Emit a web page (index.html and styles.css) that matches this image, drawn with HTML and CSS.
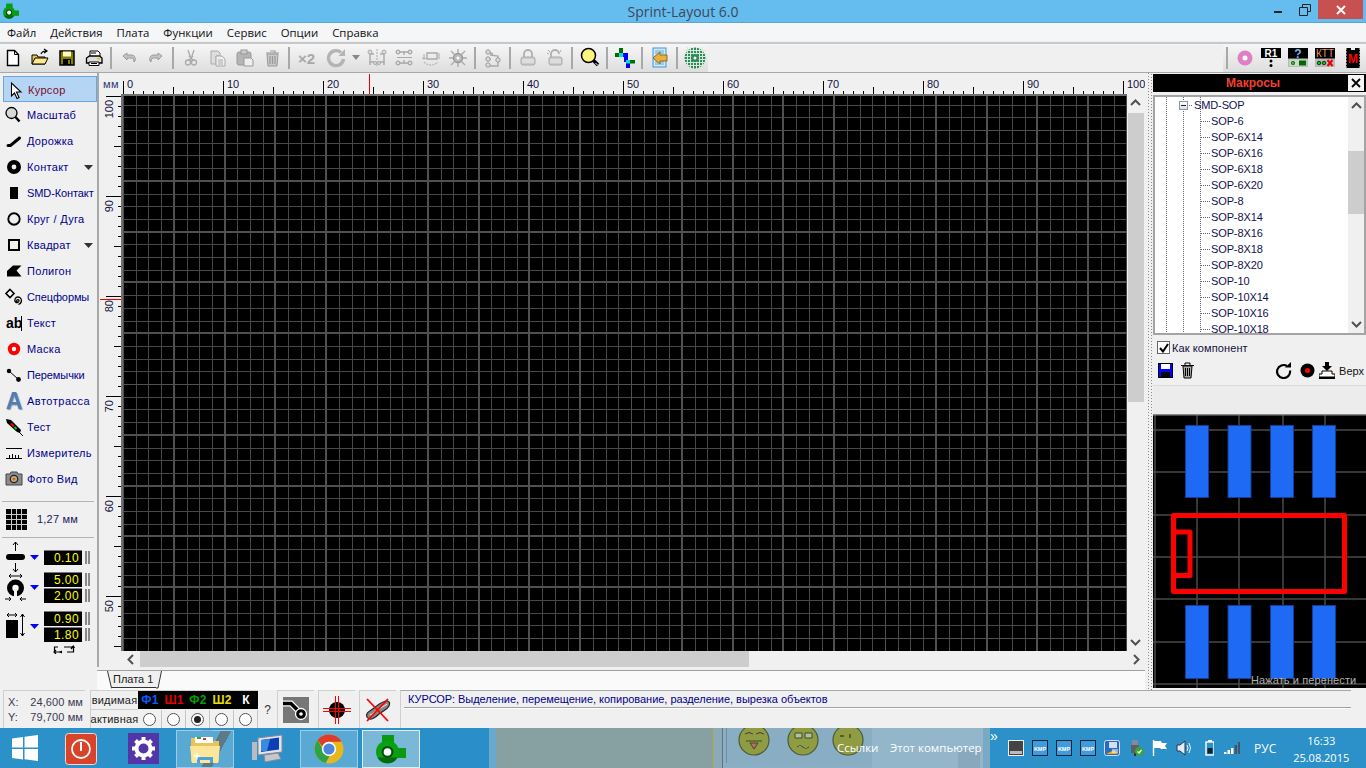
FILE: index.html
```html
<!DOCTYPE html>
<html lang="ru">
<head>
<meta charset="utf-8">
<title>Sprint-Layout 6.0</title>
<link rel="stylesheet" href="styles.css">
</head>
<body>
<svg class="defs" width="0" height="0">
  <defs>
    <symbol id="spider" viewBox="0 0 30 30">
      <rect x="6" y="1" width="12" height="10" fill="#0a9a12"/>
      <rect x="19" y="14" width="11" height="10" fill="#0a9a12"/>
      <circle cx="11.500" cy="18" r="11.500" fill="#0aa014"/>
      <path d="M1.500 23.500a11.500 11.500 0 0 0 20 0z" fill="#056a0c"/>
      <circle cx="11.500" cy="18" r="6" fill="#04500a"/>
      <circle cx="11.500" cy="18" r="3.800" fill="#fff"/>
    </symbol>
    <pattern id="gridp" patternUnits="userSpaceOnUse" x="123" y="130" width="254" height="254">
      <path shape-rendering="crispEdges" fill="none" stroke="#484848" stroke-width="1" d="M13 0V254M25 0V254M38 0V254M64 0V254M76 0V254M89 0V254M114 0V254M127 0V254M140 0V254M165 0V254M178 0V254M191 0V254M216 0V254M229 0V254M241 0V254M0 13H254M0 25H254M0 38H254M0 64H254M0 76H254M0 89H254M0 114H254M0 127H254M0 140H254M0 165H254M0 178H254M0 191H254M0 216H254M0 229H254M0 241H254"/>
      <path shape-rendering="crispEdges" fill="none" stroke="#505050" stroke-width="2" d="M0 0V254M51 0V254M102 0V254M152 0V254M203 0V254M0 0H254M0 51H254M0 102H254M0 152H254M0 203H254"/>
    </pattern>
    <pattern id="rtick" patternUnits="userSpaceOnUse" x="123" y="73" width="100" height="21">
      <path shape-rendering="crispEdges" stroke="#000" d="M0 8V21M50 14V21M10 18V21M20 18V21M30 18V21M40 18V21M60 18V21M70 18V21M80 18V21M90 18V21"/>
    </pattern>
    <pattern id="vtick" patternUnits="userSpaceOnUse" x="99" y="96" width="22" height="100">
      <path shape-rendering="crispEdges" stroke="#000" d="M7 0H22M15 50H22M19 10H22M19 20H22M19 30H22M19 40H22M19 60H22M19 70H22M19 80H22M19 90H22"/>
    </pattern>
  </defs>
</svg>

<header class="titlebar">
  <svg class="title-icon" width="16" height="16"><use href="#spider"/></svg>
  <span class="title-text">Sprint-Layout 6.0</span>
  <div class="win-btns">
    <span class="win-btn"><svg width="12" height="12"><rect x="2" y="7" width="8" height="2" fill="#222"/></svg></span>
    <span class="win-btn"><svg width="12" height="12"><path d="M3.500 3V.5h8v7H9M.5 3.500h8v8h-8z" fill="none" stroke="#222"/></svg></span>
    <span class="win-close"><svg width="12" height="12"><path d="M2 2l8 8M10 2l-8 8" stroke="#fff" stroke-width="2"/></svg></span>
  </div>
</header>

<nav class="menubar">
  <span class="menu-item">Файл</span><span class="menu-item">Действия</span><span class="menu-item">Плата</span><span class="menu-item">Функции</span><span class="menu-item">Сервис</span><span class="menu-item">Опции</span><span class="menu-item">Справка</span>
</nav>

<div class="toolbar">
  <span class="tb"><svg width="20" height="20"><path d="M4.500 2.500h7l4 4v11h-11z" fill="#fff" stroke="#000" stroke-width="1.400"/><path d="M11.500 2.500v4h4" fill="none" stroke="#000"/></svg></span>
  <span class="tb"><svg width="20" height="20"><path d="M2 16V7h5l1 2h7v7z" fill="#e8c860" stroke="#000"/><path d="M2 16l3-6h13l-3 6z" fill="#ffe88a" stroke="#000"/><path d="M11 6c1-3 3-3 5-3M14 1l3 2-3 2" fill="none" stroke="#000" stroke-width="1.200"/></svg></span>
  <span class="tb"><svg width="20" height="20"><rect x="3" y="3" width="14" height="14" fill="#808000" stroke="#000" stroke-width="1.500"/><rect x="6" y="3.500" width="8" height="5" fill="#fff8c0"/><rect x="6" y="11" width="8" height="6" fill="#000"/><rect x="11" y="12" width="2" height="4" fill="#808000"/></svg></span>
  <span class="tb"><svg width="20" height="20"><path d="M6 8V3h8l2 2v3" fill="#fff" stroke="#000"/><path d="M2.500 15V10l3-2h10l2.500 2v5z" fill="#ddd" stroke="#000" stroke-width="1.300"/><path d="M5 14h10v3.500H5z" fill="#fff" stroke="#000"/><rect x="13" y="10" width="3" height="1.500" fill="#e0c020"/><path d="M7 5h5M7 15.500h6" stroke="#000"/></svg></span>
  <span class="sep"></span>
  <span class="tb"><svg width="20" height="20"><path d="M4 8l4-3v2h4c3 0 5 2 4 6l-1 1c0-3-1-4-3-4H8v2z" fill="#c4c4c4" stroke="#999"/></svg></span>
  <span class="tb"><svg width="20" height="20"><path d="M16 8l-4-3v2H8c-3 0-5 2-4 6l1 1c0-3 1-4 3-4h4v2z" fill="#c4c4c4" stroke="#999"/></svg></span>
  <span class="sep"></span>
  <span class="tb"><svg width="20" height="20"><path d="M7 2l3 9 3-9M7 17a2.500 2.500 0 1 0 0-5 2.500 2.500 0 0 0 0 5zM13 17a2.500 2.500 0 1 0 0-5 2.500 2.500 0 0 0 0 5zM8 12l4-4M12 12L8 8" fill="none" stroke="#aaa" stroke-width="1.300"/></svg></span>
  <span class="tb"><svg width="20" height="20"><path d="M3 3h7l2 2v3H8v8H3z" fill="#ddd" stroke="#aaa"/><path d="M8 8h6l3 3v7H8z" fill="#eee" stroke="#aaa"/><path d="M10 12h5M10 14h5M10 16h5" stroke="#aaa"/></svg></span>
  <span class="tb"><svg width="20" height="20"><rect x="2" y="4" width="14" height="13" rx="2" fill="#b4b4b4" stroke="#999"/><rect x="6" y="2" width="6" height="4" fill="#ccc" stroke="#999"/><path d="M9 10h7l2 2v6H9z" fill="#eee" stroke="#999"/></svg></span>
  <span class="tb"><svg width="20" height="20"><path d="M5 6h11l-1 12H6z" fill="#c8c8c8" stroke="#999"/><path d="M4 5h13M8 3h5v2M8 8v8M10.500 8v8M13 8v8" fill="none" stroke="#999" stroke-width="1.200"/></svg></span>
  <span class="sep"></span>
  <span class="tb tb-x2">×2</span>
  <span class="tb tb-wide"><svg width="24" height="20"><path d="M15 4.500a7.500 7.500 0 1 0 2.500 6.500" fill="none" stroke="#b4b4b4" stroke-width="3.400"/><path d="M12.500 8l6.500 0V1z" fill="#b4b4b4"/></svg><svg class="tb-caret" width="9" height="6"><path d="M0 0h8L4 5z" fill="#888"/></svg></span>
  <span class="tb"><svg width="20" height="20"><path d="M10 1v18" stroke="#aaa" stroke-dasharray="2 1"/><path d="M3 3v14M17 3v14M3 6h4M17 6h-4M3 14h4M17 14h-4" stroke="#aaa" stroke-width="1.500" fill="none"/><circle cx="3" cy="4" r="2" fill="#ddd" stroke="#aaa"/><circle cx="17" cy="4" r="2" fill="#ddd" stroke="#aaa"/><circle cx="8" cy="15" r="1.500" fill="#ddd" stroke="#aaa"/><circle cx="12" cy="15" r="1.500" fill="#ddd" stroke="#aaa"/></svg></span>
  <span class="tb"><svg width="20" height="20"><path d="M3 9.500h15" stroke="#aaa"/><path d="M3 4h14M3 15h14M10 7V3M10 12v4" stroke="#aaa" stroke-width="1.400"/><circle cx="4" cy="4" r="2" fill="#ddd" stroke="#999"/><circle cx="16" cy="4" r="2" fill="#ddd" stroke="#999"/><circle cx="4" cy="15" r="2" fill="#ddd" stroke="#999"/><circle cx="16" cy="15" r="2" fill="#ddd" stroke="#999"/></svg></span>
  <span class="tb"><svg width="20" height="20"><path d="M6 5h10v6H6z" fill="none" stroke="#aaa" stroke-width="1.400"/><path d="M3 6v5l-2-1M3 11l2-1M18 5v6" stroke="#aaa" fill="none"/><path d="M3 14c4 4 10 4 14 0" fill="none" stroke="#bbb" stroke-width="1.400" stroke-dasharray="2 1"/></svg></span>
  <span class="tb"><svg width="20" height="20"><circle cx="10" cy="10" r="4.500" fill="#bbb" stroke="#999" stroke-width="1.500"/><circle cx="10" cy="10" r="1.500" fill="#fff"/><path d="M10 1v4M10 15v4M1 10h4M15 10h4M3 3l3.500 3.500M17 3l-3.500 3.500M3 17l3.500-3.500M17 17l-3.500-3.500" stroke="#aaa" stroke-width="1.400"/></svg></span>
  <span class="sep"></span>
  <span class="tb"><svg width="20" height="20"><path d="M5 4l5 2M4 11h4M5 18h10V8l-8-1" fill="none" stroke="#aaa" stroke-width="1.400"/><circle cx="5" cy="4" r="2.200" fill="#ddd" stroke="#999"/><circle cx="5" cy="11" r="2.200" fill="#ddd" stroke="#999"/><circle cx="5" cy="17" r="2.200" fill="#ddd" stroke="#999"/><circle cx="15" cy="12" r="2.200" fill="#ddd" stroke="#999"/></svg></span>
  <span class="sep"></span>
  <span class="tb"><svg width="20" height="20"><path d="M6 9V6a4 4 0 0 1 8 0v3" fill="none" stroke="#b0b0b0" stroke-width="1.800"/><rect x="3" y="9" width="14" height="8" rx="2" fill="#ccc" stroke="#aaa"/><path d="M4 12h12M4 14h12" stroke="#eee"/></svg></span>
  <span class="tb"><svg width="20" height="20"><path d="M6 9V6a4 4 0 0 1 8 0" fill="none" stroke="#b0b0b0" stroke-width="1.800"/><rect x="4" y="9" width="13" height="8" rx="2" fill="#ccc" stroke="#aaa"/><path d="M5 12h11M5 14h11" stroke="#eee"/><path d="M2 5l2 1M3 2l2 2M16 2l-1 2" stroke="#aaa"/></svg></span>
  <span class="sep"></span>
  <span class="tb"><svg width="20" height="22"><path d="M13 13l5 5" stroke="#000" stroke-width="3.600"/><path d="M15.500 16l2 2" stroke="#fff" stroke-width="1"/><circle cx="8.500" cy="8.500" r="7" fill="#fff57a" stroke="#000" stroke-width="1.500"/></svg></span>
  <span class="sep"></span>
  <span class="tb"><svg width="20" height="20"><rect x="4" y="0" width="4" height="6" fill="#006f00"/><rect x="0" y="5" width="10" height="4" fill="#006f00"/><rect x="12" y="12" width="8" height="3.500" fill="#006f00"/><path d="M7 5h6v9h2v6h-4v-6h-2V9H7z" fill="#0000f0"/><rect x="4" y="5" width="4" height="4" fill="#00e0e0"/><rect x="11" y="12" width="4" height="3.500" fill="#00e0e0"/></svg></span>
  <span class="sep"></span>
  <span class="tb"><svg width="20" height="22"><rect x="3" y="1" width="13" height="19" fill="#cfe8fb" stroke="#3b97dd"/><path d="M5 4h9M5 6h9M5 15h9M5 17h9" stroke="#7ab"/><path d="M3 11l7-6v3h7v6h-7v3z" fill="#e8b040" stroke="#8a6a20"/></svg></span>
  <span class="sep"></span>
  <span class="tb"><svg width="22" height="22"><circle cx="11" cy="11" r="10.500" fill="#2e8b57"/><path d="M0 3.500h22M0 6.500h22M0 9.500h22M0 12.500h22M0 15.500h22M0 18.500h22M3.500 0v22M6.500 0v22M9.500 0v22M12.500 0v22M15.500 0v22M18.500 0v22" stroke="#d8e8dc"/><circle cx="11" cy="11" r="4" fill="#2e8b57"/><circle cx="11" cy="11" r="1.500" fill="#fff"/></svg></span>
  <span class="tb-fill"></span>
  <span class="sep"></span>
  <span class="tb"><svg width="20" height="20"><circle cx="10" cy="10" r="7.500" fill="#e080c4"/><circle cx="10" cy="10" r="2.500" fill="#fff"/></svg></span>
  <span class="tb"><svg width="21" height="22"><rect x="0" y="1" width="20" height="10" fill="#000"/><text x="10" y="9.500" text-anchor="middle" class="ico-r1">R1</text><circle cx="10" cy="14" r="1.500"/><circle cx="10" cy="18.500" r="1.500"/></svg></span>
  <span class="tb"><svg width="21" height="22"><rect x="0" y="1" width="20" height="19" fill="#bbb"/><rect x="0" y="1" width="20" height="10.500" fill="#000"/><text x="10" y="10.500" text-anchor="middle" class="ico-q">?</text><rect x="1.500" y="12.500" width="17" height="6.500" fill="#c8dcc8"/><circle cx="5" cy="16" r="2" fill="#060"/><circle cx="5" cy="16" r=".7" fill="#fff"/><rect x="11" y="13.500" width="7" height="5" fill="#060"/></svg></span>
  <span class="tb"><svg width="21" height="22"><rect x="0" y="1" width="20" height="19" fill="#bbb"/><rect x="0" y="1" width="20" height="10.500" fill="#000"/><text x="10" y="10" text-anchor="middle" class="ico-ktt">КТТ</text><circle cx="4" cy="16" r="1.800" fill="#0c0" stroke="#000" stroke-width=".7"/><circle cx="9" cy="16" r="1.800" fill="#0c0" stroke="#000" stroke-width=".7"/><path d="M12.500 13l5 6M17.500 13l-5 6" stroke="#e00" stroke-width="2"/></svg></span>
  <span class="tb"><svg width="14" height="22"><rect x="0" y="1" width="14" height="20" fill="#000"/><path d="M0 2h1M0 5h1M0 8h1M0 11h1M0 14h1M0 17h1M0 20h1M13 2h1M13 5h1M13 8h1M13 11h1M13 14h1M13 17h1M13 20h1" stroke="#eee"/><rect x="5" y="1" width="4" height="2" fill="#eee"/><text x="7" y="16" text-anchor="middle" class="ico-m">M</text></svg></span>
</div>

<main class="main">
  <aside class="tools">
    <div class="tool selected">
      <svg class="ic" viewBox="0 0 22 22"><path d="M7.500 4V17l3-3 2.500 5.500 2-1-2.500-5.500h4.500z" fill="#fff" stroke="#000" stroke-width="1.100"/></svg>
      <span>Курсор</span>
    </div>
    <div class="tool">
      <svg class="ic" viewBox="0 0 22 22"><path d="M12.500 13l4 4.500" stroke="#000" stroke-width="2.500"/><circle cx="8.500" cy="9" r="5.500" fill="#d8d8d8" stroke="#000" stroke-width="1.300"/></svg>
      <span>Масштаб</span>
    </div>
    <div class="tool">
      <svg class="ic" viewBox="0 0 22 22"><path d="M5 15.500h2.500l9-7.500" fill="none" stroke="#000" stroke-width="3" stroke-linecap="round"/></svg>
      <span>Дорожка</span>
    </div>
    <div class="tool">
      <svg class="ic" viewBox="0 0 22 22"><circle cx="11" cy="11" r="4.700" fill="none" stroke="#000" stroke-width="4.600"/></svg>
      <span>Контакт</span>
      <svg class="caret" width="9" height="5"><path d="M0 0h9L4.500 5z" fill="#333"/></svg>
    </div>
    <div class="tool">
      <svg class="ic" viewBox="0 0 22 22"><rect x="7" y="5" width="8" height="12" fill="#000"/></svg>
      <span class="tight">SMD-Контакт</span>
    </div>
    <div class="tool">
      <svg class="ic" viewBox="0 0 22 22"><circle cx="11" cy="11" r="5.700" fill="none" stroke="#000" stroke-width="1.900"/></svg>
      <span>Круг / Дуга</span>
    </div>
    <div class="tool">
      <svg class="ic" viewBox="0 0 22 22"><rect x="6" y="6" width="10" height="10" fill="none" stroke="#000" stroke-width="2"/></svg>
      <span>Квадрат</span>
      <svg class="caret" width="9" height="5"><path d="M0 0h9L4.500 5z" fill="#333"/></svg>
    </div>
    <div class="tool">
      <svg class="ic" viewBox="0 0 22 22"><path d="M4 16.500V11l6-5.500h8.500l-5 5 5 6z" fill="#000"/></svg>
      <span>Полигон</span>
    </div>
    <div class="tool">
      <svg class="ic" viewBox="0 0 22 22"><path d="M7 3.500l4 4-4 4-4-4z" fill="#fff" stroke="#000" stroke-width="1.600"/><path d="M14.500 16a1.200 1.200 0 1 1 1.500-1.500c.4 1.800-2.200 2.800-3.400 1.500-1.800-1.800-.2-5 2.400-5 2.600 0 3.800 2.500 3.400 4.500-.2 1-1.300 2.500-3 3" fill="none" stroke="#000" stroke-width="1.300"/></svg>
      <span class="tight">Спецформы</span>
    </div>
    <div class="tool">
      <span class="ic-ab">ab</span>
      <span>Текст</span>
    </div>
    <div class="tool">
      <svg class="ic" viewBox="0 0 22 22"><circle cx="11" cy="11" r="4.200" fill="#fff" stroke="#f00" stroke-width="4"/></svg>
      <span>Маска</span>
    </div>
    <div class="tool">
      <svg class="ic" viewBox="0 0 22 22"><path d="M6 7l9 8" stroke="#000"/><circle cx="6" cy="7" r="2.200"/><circle cx="15.500" cy="15.500" r="2.400"/></svg>
      <span class="tight">Перемычки</span>
    </div>
    <div class="tool">
      <span class="ic-a">A</span>
      <span class="wide">Автотрасса</span>
    </div>
    <div class="tool">
      <svg class="ic" viewBox="0 0 22 22"><path d="M15 15l5 5" stroke="#000"/><path d="M3 3l5 1 10 10-1 3-3-1L4 7z" fill="#000"/><path d="M8 7.500l3 3" stroke="#e00" stroke-width="2.200"/><path d="M11.500 11l2 2" stroke="#0c0" stroke-width="2.200"/></svg>
      <span>Тест</span>
    </div>
    <div class="tool">
      <svg class="ic" viewBox="0 0 22 22"><path d="M3 6.500h16M3 16.500h16M6.500 16v-3M9.500 16v-4M12.500 16v-3M15.500 16v-3" stroke="#000" stroke-width="1" fill="none"/></svg>
      <span>Измеритель</span>
    </div>
    <div class="tool">
      <svg class="ic" viewBox="0 0 22 22"><path d="M3 6h4l1-2h6l1 2h4v11H3z" fill="#8c8c8c" stroke="#444"/><circle cx="11" cy="11" r="3.700" fill="#c8b090" stroke="#222" stroke-width="1.300"/><circle cx="11" cy="11" r="1.500" fill="#c06820"/></svg>
      <span>Фото Вид</span>
    </div>

    <div class="grid-row">
      <svg width="21" height="21"><rect width="21" height="21" fill="#000"/><path d="M0 5.500h21M0 10.500h21M0 15.500h21M5.500 0v21M10.500 0v21M15.500 0v21" stroke="#ccc"/></svg>
      <span>1,27 мм</span>
    </div>

    <div class="params">
      <div class="param p1">
        <svg class="p-ic" width="28" height="15"><rect x="4" y="4" width="19" height="6" rx="3"/><path d="M13.500 -8v9M13.500 13v9M11 -5l2.500-3 2.500 3M11 19l2.500 3 2.500-3" fill="none" stroke="#000"/></svg>
        <svg class="p-tri" width="10" height="6"><path d="M0 0h9L4.500 5z" fill="#00f"/></svg>
        <div class="nums"><span class="num">0.10</span></div>
        <span class="grip"></span>
      </div>
      <div class="param p2">
        <svg class="p-ic" width="28" height="31"><path d="M7 4h13M7 4l2-2M7 4l2 2M20 4l-2-2M20 4l-2 2M3 27h6M18 27h6M9 27l-2-2M9 27l-2 2M18 27l2-2M18 27l2 2" fill="none" stroke="#000"/><circle cx="13.500" cy="16" r="8.500" fill="#000"/><circle cx="13.500" cy="16" r="3.200" fill="#fff"/><rect x="12" y="17" width="3" height="8" fill="#f0f0f0"/></svg>
        <svg class="p-tri" width="10" height="6"><path d="M0 0h9L4.500 5z" fill="#00f"/></svg>
        <div class="nums"><span class="num">5.00</span><span class="num">2.00</span></div>
        <span class="grip"></span>
      </div>
      <div class="param p3">
        <svg class="p-ic" width="28" height="31"><rect x="4" y="9" width="12" height="18" fill="#000"/><path d="M5 4h10M5 4l2-2M5 4l2 2M15 4l-2-2M15 4l-2 2M20.500 3v22M20.500 3l-2 3M20.500 3l2 3M20.500 25l-2-3M20.500 25l2-3" fill="none" stroke="#000"/></svg>
        <svg class="p-tri" width="10" height="6"><path d="M0 0h9L4.500 5z" fill="#00f"/></svg>
        <div class="nums"><span class="num">0.90</span><span class="num">1.80</span></div>
        <span class="grip"></span>
      </div>
      <svg class="swap" width="22" height="9"><path d="M5 2H1.500V7H9M3 5l-2 2 2 2M14 7h6.500V2H11M18 4l2.500-3" fill="none" stroke="#000" stroke-width="1.200"/><path d="M9 5.500v3l-3-1.500zM18 3l2.500-3L22 3z" fill="#000"/></svg>
    </div>
  </aside>

  <section class="center">
    <div class="work">
      <svg class="ruler-top" width="1046" height="21" viewBox="99 73 1046 21">
        <rect x="123" y="73" width="1001" height="21" fill="url(#rtick)"/>
        <rect x="369" y="74" width="1" height="20" fill="#e00"/>
        <text x="103" y="88" class="rl mm">мм</text>
        <text x="127" y="88" class="rl">0</text><text x="227" y="88" class="rl">10</text><text x="327" y="88" class="rl">20</text><text x="427" y="88" class="rl">30</text><text x="527" y="88" class="rl">40</text><text x="627" y="88" class="rl">50</text><text x="727" y="88" class="rl">60</text><text x="827" y="88" class="rl">70</text><text x="927" y="88" class="rl">80</text><text x="1027" y="88" class="rl">90</text><text x="1127" y="88" class="rl">100</text>
      </svg>
      <div class="work-row">
        <svg class="ruler-left" width="22" height="557" viewBox="99 94 22 557">
          <rect x="99" y="96" width="22" height="555" fill="url(#vtick)"/>
          <rect x="100" y="299" width="21" height="1" fill="#e00"/>
          <text transform="translate(113 100) rotate(-90)" text-anchor="end" class="rl">100</text>
          <text transform="translate(113 200) rotate(-90)" text-anchor="end" class="rl">90</text>
          <text transform="translate(113 300) rotate(-90)" text-anchor="end" class="rl">80</text>
          <text transform="translate(113 400) rotate(-90)" text-anchor="end" class="rl">70</text>
          <text transform="translate(113 500) rotate(-90)" text-anchor="end" class="rl">60</text>
          <text transform="translate(113 600) rotate(-90)" text-anchor="end" class="rl">50</text>
        </svg>
        <div class="canvas">
          <svg width="1004" height="555" viewBox="123 96 1004 555"><rect x="123" y="96" width="1004" height="555" fill="#000"/><rect x="123" y="96" width="1004" height="555" fill="url(#gridp)"/></svg>
        </div>
        <div class="vscroll">
          <span class="sb-btn"><svg width="11" height="7"><path d="M1 6l4.500-4.500L10 6" fill="none" stroke="#505050" stroke-width="2"/></svg></span>
          <span class="vthumb"></span>
          <span class="sb-gap"></span>
          <span class="sb-btn"><svg width="11" height="7"><path d="M1 1l4.500 4.500L10 1" fill="none" stroke="#505050" stroke-width="2"/></svg></span>
        </div>
      </div>
      <div class="hscroll">
        <span class="hbtn"><svg width="7" height="11"><path d="M6 1L1.500 5.500 6 10" fill="none" stroke="#505050" stroke-width="2"/></svg></span>
        <span class="hthumb"></span>
        <span class="sb-gap"></span>
        <span class="hbtn"><svg width="7" height="11"><path d="M1 1l4.500 4.500L1 10" fill="none" stroke="#505050" stroke-width="2"/></svg></span>
      </div>
    </div>
    <div class="tabbar">
      <div class="tab">
        <svg width="5" height="18"><path d="M.5 0l4 17h1V0z" fill="#f0f0f0"/><path d="M.5 0l4 17h1" fill="none" stroke="#333"/></svg>
        <span class="tab-text">Плата 1</span>
        <svg width="6" height="18"><path d="M5.500 0L2 17H0V0z" fill="#f0f0f0"/><path d="M5.500 0L2 17H0" fill="none" stroke="#333"/></svg>
      </div>
    </div>
  </section>

  <div class="gripper"></div>

  <aside class="macros">
    <div class="macro-title"><span>Макросы</span>
      <span class="macro-close"><svg width="10" height="10"><path d="M1 1l8 8M9 1L1 9" stroke="#000" stroke-width="1.800"/></svg></span>
    </div>
    <div class="tree-box">
      <div class="tree">
        <div class="tree-root"><span class="minus"></span><span class="conn-s"></span>SMD-SOP</div>
        <div class="leaf">SOP-6</div>
        <div class="leaf">SOP-6X14</div>
        <div class="leaf">SOP-6X16</div>
        <div class="leaf">SOP-6X18</div>
        <div class="leaf">SOP-6X20</div>
        <div class="leaf">SOP-8</div>
        <div class="leaf">SOP-8X14</div>
        <div class="leaf">SOP-8X16</div>
        <div class="leaf">SOP-8X18</div>
        <div class="leaf">SOP-8X20</div>
        <div class="leaf">SOP-10</div>
        <div class="leaf">SOP-10X14</div>
        <div class="leaf">SOP-10X16</div>
        <div class="leaf">SOP-10X18</div>
      </div>
      <div class="tree-sb">
        <span class="sb-btn"><svg width="11" height="7"><path d="M1 6l4.500-4.500L10 6" fill="none" stroke="#505050" stroke-width="2"/></svg></span>
        <span class="tree-thumb"></span>
        <span class="sb-gap"></span>
        <span class="sb-btn"><svg width="11" height="7"><path d="M1 1l4.500 4.500L10 1" fill="none" stroke="#505050" stroke-width="2"/></svg></span>
      </div>
    </div>
    <label class="check-row"><span class="check"><svg width="10" height="10"><path d="M1 5l3 3.500L9 1" fill="none" stroke="#000" stroke-width="2"/></svg></span>Как компонент</label>
    <div class="macro-tools">
      <svg width="15" height="15"><rect x=".5" y=".5" width="14" height="14" fill="#00f" stroke="#000"/><rect x="3" y="1" width="9" height="5" fill="#fff"/><rect x="3" y="9" width="9" height="5.500" fill="#000"/></svg>
      <svg class="mt-trash" width="15" height="17"><path d="M3 4h9l-1 12H4z" fill="#aaa" stroke="#000"/><path d="M1 3.500h13M5 3V1h5v2M5.500 6v8M7.500 6v8M9.500 6v8" fill="none" stroke="#000"/></svg>
      <span class="mt-fill"></span>
      <svg width="17" height="17"><path d="M12 4a6.500 6.500 0 1 0 3 4.500" fill="none" stroke="#000" stroke-width="2.200"/><path d="M10 5.500h6V0z" fill="#000"/></svg>
      <svg class="mt-rec" width="15" height="15"><circle cx="7.500" cy="7.500" r="7"/><circle cx="7.500" cy="7.500" r="2.500" fill="#f00"/></svg>
      <svg class="mt-stamp" width="16" height="17"><path d="M6 0h4v4h3L8 9 3 4h3z" fill="#000"/><path d="M3 9h10v3h3v3H0v-3h3z" fill="#fff" stroke="#000"/><rect x="0" y="15" width="16" height="2"/></svg>
      <span class="mt-label">Верх</span>
    </div>
    <div class="preview-strip"></div>
    <svg class="preview" width="213" height="274" viewBox="1153 414 213 274">
      <rect x="1153" y="414" width="213" height="274" fill="#000"/>
      <path d="M1155 414V688M1197 414V688M1239 414V688M1283 414V688M1325 414V688M1153 430H1366M1153 472H1366M1153 515H1366M1153 557H1366M1153 599H1366M1153 642H1366M1153 684H1366" stroke="#4a4a4a" stroke-width="1.500"/>
      <rect x="1153" y="414" width="213" height="1.500" fill="#888"/>
      <g fill="#1e6af5" stroke="#0f3f9a"><rect x="1185.500" y="425.500" width="23" height="72"/><rect x="1228" y="425.500" width="23" height="72"/><rect x="1270.500" y="425.500" width="23" height="72"/><rect x="1312.500" y="425.500" width="23" height="72"/><rect x="1185.500" y="605.500" width="23" height="73"/><rect x="1228" y="605.500" width="23" height="73"/><rect x="1270.500" y="605.500" width="23" height="73"/><rect x="1312.500" y="605.500" width="23" height="73"/></g>
      <path d="M1173.500 515.500H1344.500V591.500H1173.500ZM1173.500 532H1190V575.500H1173.500" fill="none" stroke="#f00" stroke-width="5" stroke-linejoin="round"/>
      <text x="1251" y="684" class="drag-hint">Нажать и перенести</text>
    </svg>
  </aside>
</main>

<footer class="statusbar">
  <div class="coords">
    <div class="coord"><span>X:</span><span>24,600 мм</span></div>
    <div class="coord"><span>Y:</span><span>79,700 мм</span></div>
  </div>
  <div class="layers">
    <span class="lay-name">видимая</span>
    <span class="lay l-f1">Ф1</span><span class="lay l-s1">Ш1</span><span class="lay l-f2">Ф2</span><span class="lay l-s2">Ш2</span><span class="lay l-k">К</span>
    <span class="lay-name">активная</span>
    <span class="rad-cell"><span class="radio"></span></span><span class="rad-cell"><span class="radio"></span></span><span class="rad-cell"><span class="radio on"></span></span><span class="rad-cell"><span class="radio"></span></span><span class="rad-cell"><span class="radio"></span></span>
  </div>
  <span class="help">?</span>
  <div class="st-btn"><svg width="26" height="26"><rect width="26" height="26" fill="#777"/><path d="M0 6.500h8l9 9" fill="none" stroke="#fff" stroke-width="6"/><path d="M0 6.500h8l9 9" fill="none" stroke="#000" stroke-width="3.600"/><circle cx="18" cy="17" r="5.500" fill="#000" stroke="#fff" stroke-width="1.300"/><circle cx="18" cy="17" r="1.800" fill="#fff"/></svg></div>
  <div class="st-btn"><svg width="28" height="28"><circle cx="14" cy="14" r="8"/><path d="M0 12.500h28M0 15.500h28M12.500 0v28M15.500 0v28" stroke="#f00"/></svg></div>
  <div class="st-btn"><svg width="28" height="28"><path d="M3 21c-2-4 3-6 7-9s8-7 13-7c3 0 3 3 2 5-2 4-6 5-10 8-3 3-9 8-12 3z" fill="#888" stroke="#222" stroke-width="1.200"/><path d="M6 19c4-1 6-5 10-7s6-3 7-4" fill="none" stroke="#eee"/><path d="M3 3l21 22M24 3L3 25" stroke="#f00" stroke-width="1.800"/></svg></div>
  <div class="message"><div class="message-text">КУРСОР: Выделение, перемещение, копирование, разделение, вырезка объектов</div></div>
</footer>

<div class="taskbar">
  <span class="start"><svg width="26" height="26"><path d="M0 3.500L11 2v10.500H0zM12.500 1.800L26 0v12.500H12.500zM0 14h11v10.500L0 23zM12.500 14H26v12l-13.500-1.800z" fill="#fff"/></svg></span>
  <span class="task-pin pin-power"><svg width="32" height="32"><rect x=".5" y=".5" width="31" height="31" rx="3" fill="#d8432a" stroke="#f4d8d0"/><circle cx="16" cy="16" r="9" fill="none" stroke="#fff" stroke-width="1.800"/><path d="M16 9v9" stroke="#fff" stroke-width="2"/></svg></span>
  <span class="task-pin pin-gear"><svg width="31" height="31"><rect width="31" height="31" fill="#5335a8"/><circle cx="15.500" cy="15.500" r="7" fill="none" stroke="#fff" stroke-width="4"/><path d="M15.500 4v5M15.500 22v5M4 15.500h5M22 15.500h5M7.500 7.500l3.500 3.500M23.500 7.500L20 11M7.500 23.500l3.500-3.500M23.500 23.500L20 20" stroke="#fff" stroke-width="4"/></svg></span>
  <span class="task-app active explorer"><svg width="32" height="30"><path d="M2 4h10l2 3h16v21H2z" fill="#e8c458"/><rect x="6" y="3" width="18" height="6" fill="#fff"/><rect x="8" y="3" width="4" height="2" fill="#3a3"/><rect x="14" y="4" width="3" height="2" fill="#c33"/><path d="M1 12h30l-2 17H3z" fill="#fbe69a"/><path d="M8 23h16v6h-3v-3H11v3H8z" fill="#4aa4d8"/><path d="M8 18l1 3 3 1-3 1-1 3-1-3-3-1 3-1z" fill="#fff"/></svg></span>
  <span class="task-app computer"><svg width="32" height="30"><path d="M6 4l24-3v17l-24 3z" fill="#dfe4ea" stroke="#889"/><path d="M9 6l18-2.500v12L9 18z" fill="#0b3fb5"/><path d="M9 6l9-1-3 12H9z" fill="#3a8ae0"/><path d="M12 21l14-2 3 6-16 3z" fill="#c4c8cc" stroke="#889"/><path d="M0 8h5v18H0z" fill="#b8bcc2"/></svg></span>
  <span class="task-app active chrome"><svg width="30" height="30" viewBox="0 0 30 30"><circle cx="15" cy="15" r="14.500" fill="#e8b71a"/><path d="M15 .5a14.500 14.500 0 0 1 12.600 7.300H15a7.300 7.300 0 0 0-6.800 4.800L3.600 6A14.500 14.500 0 0 1 15 .5z" fill="#dc3d2d"/><path d="M3.600 6l6 11a6 6 0 0 0 6 4.900L11.700 29A14.500 14.500 0 0 1 3.600 6z" fill="#2fa447"/><circle cx="15" cy="15" r="7.200" fill="#fff"/><circle cx="15" cy="15" r="5.600" fill="#4d86dc"/></svg></span>
  <span class="task-app active spider"><svg width="30" height="30"><use href="#spider"/></svg></span>
  <svg class="wall" width="570" height="40" viewBox="420 728 570 40">
    <rect x="420" y="728" width="69" height="40" fill="#2a8fc8"/>
    <rect x="489" y="728" width="7" height="40" fill="#6aa9cb"/>
    <rect x="496" y="728" width="217" height="40" fill="#87a0a2"/>
    <rect x="713" y="728" width="10" height="40" fill="#8aaab8"/>
    <rect x="712.500" y="728" width="1" height="40" fill="#b8a050"/>
    <rect x="722" y="728" width="1" height="40" fill="#62737f"/>
    <rect x="723" y="728" width="150" height="40" fill="#8aafc5"/>
    <rect x="726" y="728" width="146" height="35" fill="#89adc3"/>
    <rect x="726" y="728" width="1" height="35" fill="#6f8da3"/>
    <rect x="872" y="728" width="111" height="40" fill="#93b6cb"/>
    <rect x="983" y="728" width="7" height="40" fill="#7aa9c4"/>
    <rect x="958" y="750" width="22" height="18" fill="#8aa8bd"/>
    <g stroke="#4c5a3a" stroke-width="1.200"><circle cx="754" cy="740" r="15" fill="#8f9c42"/><circle cx="803" cy="740" r="15" fill="#8f9c42"/><circle cx="848" cy="740" r="15" fill="#8f9c42"/></g>
    <path d="M745 734q4-3 8 0M756 734q4-3 8 0M746 741h16M750 743h8l-4 6z" fill="#c06a70" stroke="#3c4a2a"/>
    <path d="M795 733h7v5h-7zM805 733h7v5h-7zM797 747q3-3 6 0t6 0" fill="#b0c0a0" stroke="#3c4a2a"/>
    <path d="M840 736h4M850 734v4" fill="none" stroke="#3c4a2a" stroke-width="1.400"/>
    <text x="837" y="752" class="wall-t">Ссылки</text>
    <text x="890" y="752" class="wall-t">Этот компьютер</text>
  </svg>
  <div class="tray">
    <span class="chev">»</span>
    <div class="tray-icons">
      <svg width="16" height="16"><rect x=".5" y=".5" width="15" height="15" fill="#444" stroke="#eee"/><rect x="2" y="11" width="12" height="3" fill="#bbb"/></svg>
      <svg width="16" height="16"><rect x=".5" y=".5" width="15" height="15" fill="#3f9be0" stroke="#123"/><text x="8" y="10.500" text-anchor="middle" class="kmp">KMP</text></svg>
      <svg width="16" height="16"><rect x=".5" y=".5" width="15" height="15" fill="#3f9be0" stroke="#123"/><text x="8" y="10.500" text-anchor="middle" class="kmp">KMP</text></svg>
      <svg width="16" height="16"><rect x=".5" y=".5" width="15" height="15" fill="#3f9be0" stroke="#123"/><text x="8" y="10.500" text-anchor="middle" class="kmp">KMP</text></svg>
      <svg width="16" height="16"><rect x=".5" y=".5" width="15" height="15" rx="2" fill="#2b6ac4" stroke="#dde"/><rect x="5" y="2" width="8" height="6" fill="#cfe0f5"/><path d="M2 14l8-4 4 4z" fill="#e8b030"/><path d="M8 10h6M8 12h6" stroke="#fff"/></svg>
      <svg width="16" height="16"><rect x="4" y="0" width="6" height="5" fill="#889"/><rect x="3" y="5" width="8" height="8" fill="#5a6066"/><rect x="6" y="13" width="2" height="3" fill="#333"/><circle cx="11.500" cy="11.500" r="4.500" fill="#3aa33a"/><path d="M9.500 11.500l1.500 1.500 2.500-3" fill="none" stroke="#fff" stroke-width="1.200"/></svg>
      <svg width="16" height="16"><path d="M1.500 0v16" stroke="#fff" stroke-width="1.400"/><path d="M2 1h7l1 2h5l-2 3 2 3H9L8 8H2z" fill="#fff"/></svg>
      <svg width="16" height="16"><path d="M1 5h3l5-4v14l-5-4H1z" fill="#e0edf5" stroke="#334"/><path d="M11 5q2 3 0 6M13 3q3 5 0 10" fill="none" stroke="#eef"/></svg>
    </div>
    <span class="tray-gap"><svg width="10" height="16"><rect x="2" y="2" width="8" height="13" fill="none" stroke="#fff" stroke-width="1.400"/><rect x="4" y="0" width="4" height="2" fill="#fff"/><rect x="3.500" y="8" width="5" height="5.500" fill="#123"/></svg></span>
    <span class="tray-sig"><svg width="16" height="13"><rect x="0" y="10" width="2.500" height="2" fill="#fff"/><rect x="3.500" y="8" width="2.500" height="4" fill="#fff"/><rect x="7" y="6" width="2.500" height="6" fill="#fff"/><rect x="10.500" y="3" width="2.500" height="9" fill="#456"/><rect x="14" y="0" width="2" height="12" fill="#456"/></svg></span>
    <span class="lang">РУС</span>
    <div class="clock"><span>16:33</span><span>25.08.2015</span></div>
  </div>
</div>
</body>
</html>
```
FILE: styles.css
```css
html, body { margin: 0; padding: 0; }
body {
  width: 1366px; height: 768px; overflow: hidden;
  display: flex; flex-direction: column;
  background: #f0f0f0;
  font-family: "Liberation Sans", Arial, sans-serif;
  font-size: 11px; color: #000;
}
svg { display: block; flex: none; }
.defs { position: absolute; }

.titlebar {
  height: 23px; flex: none; box-sizing: border-box;
  background: #65bcef; border-bottom: 1px solid #58a6d6;
  display: flex; align-items: center;
}
.title-icon { margin-left: 3px; }
.title-text {
  flex: 1; text-align: center; padding-left: 83px;
  font: 14px "Open Sans", sans-serif; color: #3a4a58;
}
.win-btns { display: flex; height: 19px; align-self: flex-start; margin-right: 3px; }
.win-btn { width: 27px; display: flex; align-items: center; justify-content: center; }
.win-close { width: 45px; background: #c75050; display: flex; align-items: center; justify-content: center; }

.menubar {
  height: 18px; flex: none; background: #f5f6f7;
  display: flex; align-items: center;
  font: 11.4px "Open Sans", sans-serif; color: #111;
}
.menu-item { padding: 0 7px; }

.toolbar {
  height: 29px; flex: none; box-sizing: border-box;
  margin-top: 3px; display: flex; align-items: center;
  border-bottom: 1px solid #a8a8a8;
  background: linear-gradient(#f6f6f6, #dedede);
  box-shadow: 0 -2px 0 #c8c8c8, 0 -3px 0 #f0f0f0;
}
.tb { width: 27px; height: 27px; flex: none; display: flex; align-items: center; justify-content: center; }
.toolbar > .tb:first-child { margin-left: -1px; }
.tb-x2 { font-weight: bold; font-size: 15px; color: #a8a8a8; }
.tb-wide { width: 43px; gap: 1px; justify-content: flex-start; padding-left: 6px; box-sizing: border-box; }
.tb-caret { margin-left: 1px; }
.sep { width: 8px; height: 22px; flex: none; display: flex; justify-content: center; }
.sep::before { content: ""; width: 2px; background: #a8a8a8; }
.tb-fill { flex: 1; height: 27px; background: #f0f0f0; }
.ico-r1 { font: bold 10px "Liberation Sans", sans-serif; fill: #fff; }
.ico-q { font: bold 12px "Liberation Sans", sans-serif; fill: #7ab4f0; }
.ico-ktt { font: 10px "Liberation Sans", sans-serif; fill: #f09060; }
.ico-m { font: bold 12px "Liberation Sans", sans-serif; fill: #f00; }

.main { height: 617px; flex: none; display: flex; }

.tools { width: 97px; flex: none; padding-top: 3px; box-sizing: border-box; color: #00008b; letter-spacing: .3px; white-space: nowrap; }
.tool { height: 26px; display: flex; align-items: center; box-sizing: border-box; padding-left: 3px; gap: 2px; }
.tool.selected { margin-left: 3px; padding-left: 0; background: #b5d5f4; border: 1px solid #6ba6dc; color: #7a0b30; padding-top: 1px; }
.tight { letter-spacing: -.1px; }
.wide { letter-spacing: .5px; }
.ic { width: 22px; height: 22px; }
.caret { margin-left: auto; margin-right: 4px; }
.ic-ab { width: 22px; box-sizing: border-box; padding-left: 3px; font-size: 14px; font-weight: bold; color: #000; letter-spacing: 0; line-height: 16px; }
.ic-ab::after { content: ""; display: block; width: 1px; height: 15px; background: #000; margin: -15px 0 0 15px; }
.ic-a { width: 22px; text-align: center; font-size: 23px; font-weight: bold; line-height: 22px; color: #4f7fb3; letter-spacing: 0; text-shadow: 1px 1px 1px #89a; }

.grid-row {
  margin: 9px 3px 0 2px; height: 37px; box-sizing: border-box;
  border-top: 1px solid #b4b4b4; border-bottom: 1px solid #b4b4b4;
  display: flex; align-items: center; gap: 10px;
  padding: 0 0 1px 4px; color: #202060; letter-spacing: .2px;
}
.params { padding-top: 12px; }
.param { display: flex; align-items: center; }
.p-ic { overflow: visible; margin-left: 2px; }
.p-tri { width: 10px; }
.nums { margin-left: 4px; display: flex; flex-direction: column; gap: 1px; }
.num {
  width: 38px; height: 15px; box-sizing: border-box;
  background: #000; color: #ffff00; text-align: right; padding-right: 3px;
  font-size: 12px; line-height: 15px; letter-spacing: .4px;
  border-top: 1px solid #777;
}
.grip { width: 5px; height: 13px; margin-left: 3px; background: linear-gradient(90deg, #888 40%, #eee 40% 60%, #888 60%); }
.p2 .grip, .p3 .grip {
  height: 29px;
  background: linear-gradient(#f0f0f0, #f0f0f0) 0 13px / 100% 3px no-repeat, linear-gradient(90deg, #888 40%, #eee 40% 60%, #888 60%);
}
.p2 { margin-top: 7px; }
.p3 { margin-top: 8px; }
.swap { margin: 3px 0 0 53px; }

.center { width: 1048px; flex: none; display: flex; flex-direction: column; }
.work { border-left: 2px solid #a8a8a8; height: 594px; flex: none; }
.ruler-top { height: 21px; }
.work-row { display: flex; height: 557px; }
.rl { font: 11px "Liberation Sans", sans-serif; fill: #101040; }
.mm { fill: #2a3a78; letter-spacing: .4px; }
.canvas { width: 1004px; height: 555px; border-left: 2px solid #707070; border-top: 2px solid #707070; flex: none; }
.vscroll { width: 18px; flex: none; display: flex; flex-direction: column; background: #f0f0f0; }
.sb-btn { height: 17px; flex: none; display: flex; align-items: center; justify-content: center; }
.vscroll .sb-btn { width: 17px; }
.vthumb { width: 16px; height: 289px; margin: 2px 0 0 1px; background: #cdcdcd; flex: none; }
.sb-gap { flex: 1; }
.hscroll { height: 16px; display: flex; align-items: center; background: #f0f0f0; padding-left: 22px; }
.hbtn { width: 18px; height: 16px; flex: none; display: flex; align-items: center; justify-content: center; }
.hthumb { width: 609px; height: 16px; margin-left: 1px; background: #cdcdcd; flex: none; }
.tabbar { flex: none; box-sizing: border-box; margin-top: 3px; height: 20px; border-top: 1px solid #a0a0a0; background: #fafafa; padding-left: 10px; }
.tab { display: flex; width: max-content; height: 17px; }
.tab-text { height: 17px; box-sizing: border-box; padding: 0 3px 0 1px; line-height: 16px; background: #f0f0f0; border-bottom: 1px solid #333; color: #222; }

.gripper {
  width: 8px; flex: none;
  background-image: linear-gradient(#8a8a8a 34%, transparent 34%), linear-gradient(#8a8a8a 34%, transparent 34%);
  background-size: 1px 3px, 1px 3px;
  background-position: 3px 0, 6px 1px;
  background-repeat: repeat-y;
}

.macros { width: 213px; flex: none; display: flex; flex-direction: column; padding-top: 1px; box-sizing: border-box; }
.macro-title { height: 18px; flex: none; background: #000; color: #f04030; font-weight: bold; font-size: 12px; display: flex; align-items: center; justify-content: center; padding-right: 13px; box-sizing: border-box; position: relative; }
.macro-close { position: absolute; left: 195px; top: 1px; width: 16px; height: 16px; background: #f4f4f4; display: flex; align-items: center; justify-content: center; }
.tree-box { height: 240px; flex: none; margin-top: 3px; box-sizing: border-box; border: 2px solid #a4a4a4; background: #fff; display: flex; overflow: hidden; }
.tree {
  width: 193px; flex: none;
  background-image: linear-gradient(#666 50%, transparent 50%), linear-gradient(#666 50%, transparent 50%), linear-gradient(#666 50%, transparent 50%);
  background-size: 1px 2px, 1px 2px, 1px 2px;
  background-repeat: repeat-y;
  background-position: 11px 0, 28px 0, 45px 10px;
  letter-spacing: -.12px;
  color: #101050;
}
.tree-root { height: 16px; line-height: 16px; display: flex; align-items: center; padding-left: 24px; }
.minus { width: 9px; height: 9px; box-sizing: border-box; border: 1px solid #8a96a8; background: linear-gradient(#fff, #dde); display: flex; align-items: center; justify-content: center; }
.minus::before { content: ""; width: 5px; height: 1px; background: #223; }
.conn-s { width: 4px; height: 1px; margin: 0 1px 0 1px; background-image: linear-gradient(90deg, #666 50%, transparent 50%); background-size: 2px 1px; }
.leaf { height: 16px; line-height: 16px; padding-left: 46px; display: flex; align-items: center; white-space: nowrap; }
.leaf::before { content: ""; width: 9px; height: 1px; margin-right: 1px; background-image: linear-gradient(90deg, #666 50%, transparent 50%); background-size: 2px 1px; }
.tree-sb { width: 16px; flex: none; background: #f0f0f0; display: flex; flex-direction: column; }
.tree-thumb { height: 63px; margin-top: 37px; background: #cdcdcd; flex: none; }

.check-row { height: 25px; flex: none; display: flex; align-items: center; gap: 2px; padding-left: 4px; color: #111140; letter-spacing: .1px; box-sizing: border-box; }
.check { width: 13px; height: 13px; box-sizing: border-box; border: 1px solid #666; background: #fff; display: flex; align-items: center; justify-content: center; }
.macro-tools { height: 25px; flex: none; display: flex; align-items: center; padding: 0 0 4px 5px; color: #111; box-sizing: border-box; }
.mt-trash { margin-left: 7px; }
.mt-fill { flex: 1; }
.mt-rec { margin-left: 8px; }
.mt-stamp { margin-left: 4px; }
.mt-label { margin-left: 4px; padding-right: 2px; }
.preview-strip { height: 29px; flex: none; background: #ececec; border-top: 1px solid #dcdcdc; box-sizing: border-box; }
.preview { height: 274px; }
.drag-hint { font: 11px "Liberation Sans", sans-serif; fill: #b0b0b0; letter-spacing: .1px; }

.statusbar { height: 38px; flex: none; display: flex; background: #f0f0f0; color: #333; box-sizing: border-box; }
.coords { width: 82px; margin-left: 3px; box-sizing: border-box; border-top: 1px solid #cfcfcf; border-left: 1px solid #cfcfcf; padding: 4px 2px 0 4px; flex: none; letter-spacing: .1px; color: #3a3a50; }
.coord { display: flex; justify-content: space-between; height: 15px; line-height: 15px; }
.layers { margin-left: 5px; display: grid; grid-template-columns: 48px repeat(5, 24px); grid-template-rows: 19px 19px; flex: none; border-top: 1px solid #cfcfcf; box-sizing: border-box; color: #222; letter-spacing: .2px; }
.lay-name { display: flex; align-items: center; justify-content: center; border-left: 1px solid #cfcfcf; border-bottom: 1px solid #cfcfcf; white-space: nowrap; box-sizing: border-box; }
.lay { background: #000; font-weight: bold; font-size: 12px; display: flex; align-items: center; justify-content: center; height: 18px; }
.l-f1 { color: #0a5cff; } .l-s1 { color: #e60000; } .l-f2 { color: #00a000; } .l-s2 { color: #e8e000; } .l-k { color: #fff; }
.rad-cell { display: flex; align-items: center; justify-content: center; border-right: 1px solid #c4c4c4; box-sizing: border-box; }
.radio { width: 13px; height: 13px; box-sizing: border-box; border: 1px solid #555; border-radius: 50%; background: #fff; display: flex; align-items: center; justify-content: center; }
.radio.on::before { content: ""; width: 7px; height: 7px; border-radius: 50%; background: #222; }
.help { width: 19px; flex: none; text-align: center; padding-top: 13px; font-size: 12px; color: #333; }
.st-btn { width: 37px; height: 38px; box-sizing: border-box; flex: none; border-top: 1px solid #cfcfcf; border-left: 1px solid #cfcfcf; display: flex; align-items: center; justify-content: center; margin-right: 4px; }
.message { width: 951px; box-sizing: border-box; border-top: 1px solid #a8a8a8; border-left: 1px solid #cfcfcf; flex: none; padding-left: 3px; }
.message-text { height: 17px; line-height: 16px; padding-left: 4px; box-sizing: border-box; color: #00008b; border-bottom: 1px solid #a0a0a0; box-shadow: 0 1px 0 #fff; letter-spacing: -.03px; }

.taskbar { height: 40px; flex: none; display: flex; align-items: center; background: #2b91c8; color: #fff; }
.start { width: 50px; flex: none; display: flex; justify-content: center; }
.task-pin { width: 62px; flex: none; display: flex; justify-content: center; }
.pin-power { margin-top: 1px; }
.task-app { height: 38px; box-sizing: border-box; flex: none; display: flex; align-items: center; justify-content: center; margin-top: 1px; }
.active { background: rgba(255,255,255,.22); border: 1px solid rgba(255,255,255,.4); }
.explorer { width: 58px; margin-left: 2px; background: linear-gradient(118deg, rgba(255,255,255,.22) 58%, #5d7a88 58% 72%, rgba(255,255,255,.22) 72%); }
.computer { width: 55px; margin-left: 6px; }
.chrome { width: 58px; margin-left: 5px; }
.spider { width: 58px; margin-left: 4px; background: #7bb8d8; border-color: #d8eef8; }
.wall { width: 570px; height: 40px; }
.wall-t { font: 11.500px "Open Sans", sans-serif; fill: #fff; }
.tray { flex: 1; height: 40px; display: flex; align-items: center; }
.chev { width: 14px; flex: none; font-size: 14px; line-height: 14px; align-self: flex-start; margin-top: 1px; }
.tray-icons { display: flex; gap: 8px; margin-left: 4px; }
.tray-gap { margin-left: 12px; }
.tray-sig { margin-left: 10px; }
.lang { margin-left: 14px; font: 12px "Open Sans", sans-serif; }
.clock { margin-left: 14px; width: 62px; display: flex; flex-direction: column; align-items: center; font: 11px/17px "Open Sans", sans-serif; margin-top: 1px; }
.kmp { font: bold 5.500px "Liberation Sans", sans-serif; fill: #fff; }
```
